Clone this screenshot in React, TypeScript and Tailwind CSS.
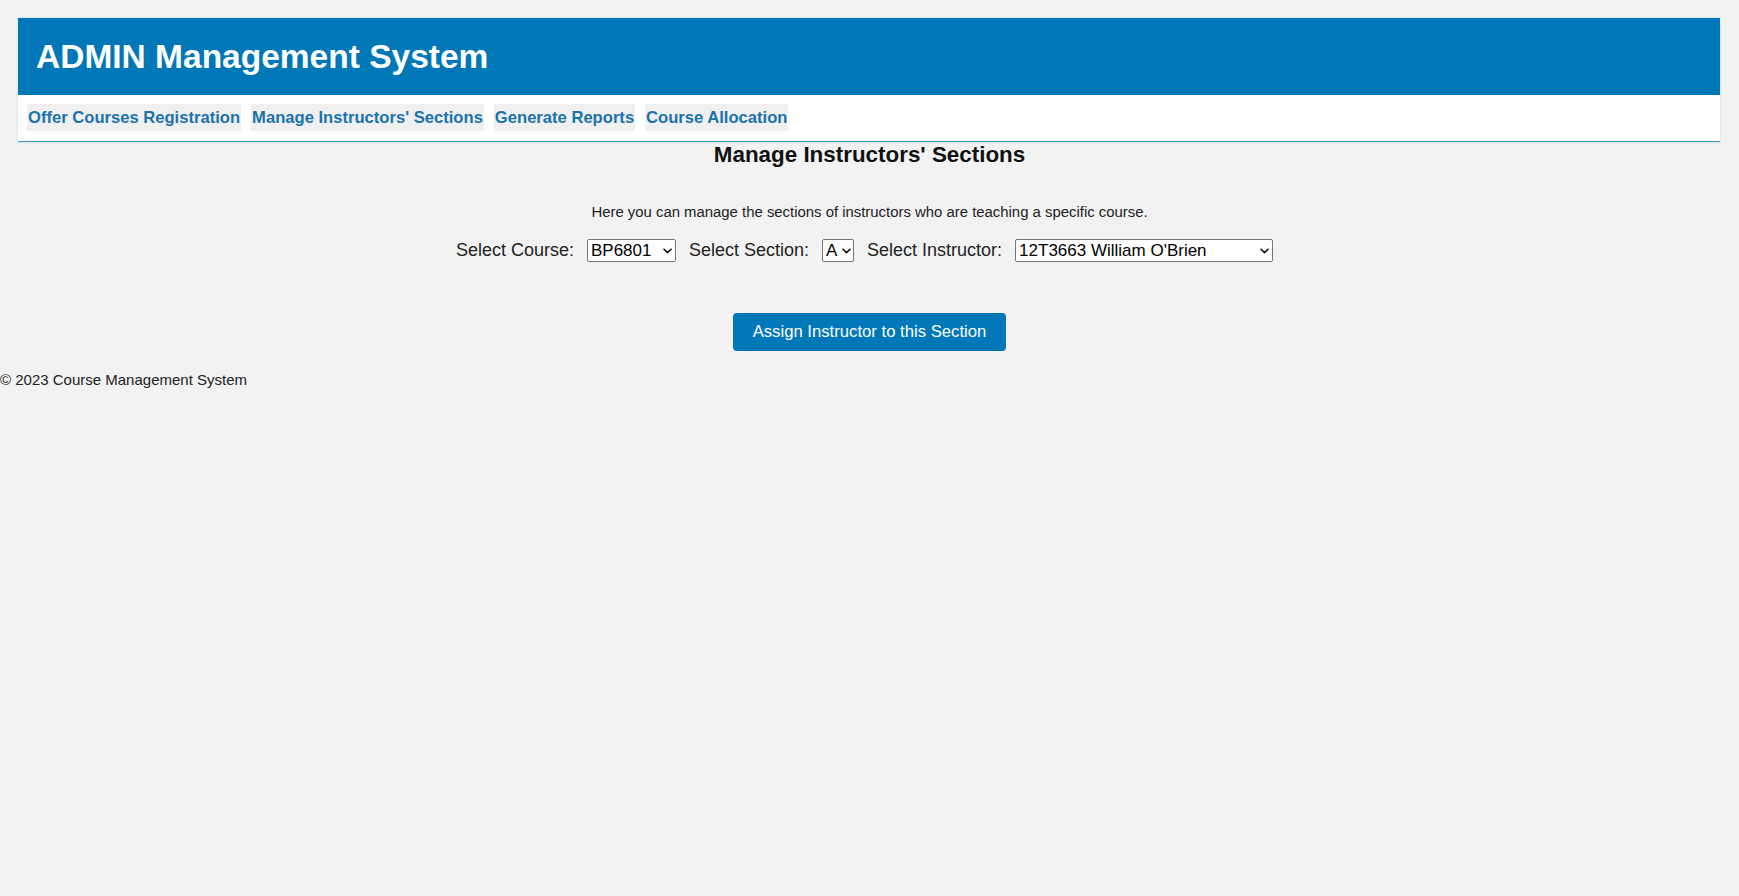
import React from "react";

function Chevron({ right }: { right: string }) {
  return (
    <svg
      className={`pointer-events-none absolute ${right} top-1/2 -translate-y-1/2`}
      width="9"
      height="6"
      viewBox="0 0 9 6"
      fill="none"
    >
      <path d="M1 1.2 L4.5 4.6 L8 1.2" stroke="#111" strokeWidth="1.6" strokeLinecap="round" strokeLinejoin="round" />
    </svg>
  );
}

function Select({
  cls,
  right,
  value,
}: {
  cls: string;
  right: string;
  value: string;
}) {
  return (
    <span className="relative inline-block">
      <select
        defaultValue={value}
        className={`${cls} h-[23px] appearance-none border border-[#767676] bg-white text-[17px] leading-[21px] text-black rounded-[2px] outline-none`}
      >
        <option value={value}>{value}</option>
      </select>
      <Chevron right={right} />
    </span>
  );
}

export default function App() {
  const links = [
    "Offer Courses Registration",
    "Manage Instructors' Sections",
    "Generate Reports",
    "Course Allocation",
  ];
  return (
    <div
      className="min-h-[896px] bg-[#f2f2f2] text-[#222]"
      style={{ fontFamily: '"Liberation Sans", Arial, sans-serif' }}
    >
      <div className="pt-[18px]">
        <div className="ml-[18px] mr-[19px] shadow-[0_0_2px_rgba(0,119,182,0.25)]">
          <div className="flex h-[77px] items-center bg-[#0077b6] pl-[18px]">
            <h1 className="text-[33.5px] font-bold leading-none text-white">ADMIN Management System</h1>
          </div>
          <nav className="flex gap-[10px] border-b border-[#3d93c4] bg-white pl-[9px] pt-[9px] pb-[10px]">
            {links.map((l) => (
              <a
                key={l}
                href="#"
                className="block bg-[#f0f0f0] px-[1px] text-[16.6px] font-bold leading-[27px] text-[#1a73ad]"
              >
                {l}
              </a>
            ))}
          </nav>
        </div>
      </div>

      <main className="flex flex-col items-center">
        <h2 className="text-[22.4px] font-bold leading-[26px] text-[#111]">Manage Instructors' Sections</h2>
        <p className="mt-[36px] text-[14.9px] leading-[17px] text-[#222]">
          Here you can manage the sections of instructors who are teaching a specific course.
        </p>
        <div className="mt-[16px] flex items-center gap-[13px] pr-[10px] text-[18px] text-[#222]">
          <label>Select Course:</label>
          <Select cls="w-[89px] pl-[3px] pr-[14px]" right="right-[4px]" value="BP6801" />
          <label>Select Section:</label>
          <Select cls="w-[32px] pl-[3px] pr-[12px]" right="right-[3px]" value="A" />
          <label>Select Instructor:</label>
          <Select cls="w-[258px] pl-[3px] pr-[14px]" right="right-[4px]" value="12T3663 William O'Brien" />
        </div>
        <button className="mt-[49px] h-[38px] rounded-[4px] bg-[#0077b6] px-[20px] text-[16.7px] text-white">
          Assign Instructor to this Section
        </button>
      </main>

      <footer className="mt-[20px] text-[15px] leading-[17px] text-[#222]">© 2023 Course Management System</footer>
    </div>
  );
}
